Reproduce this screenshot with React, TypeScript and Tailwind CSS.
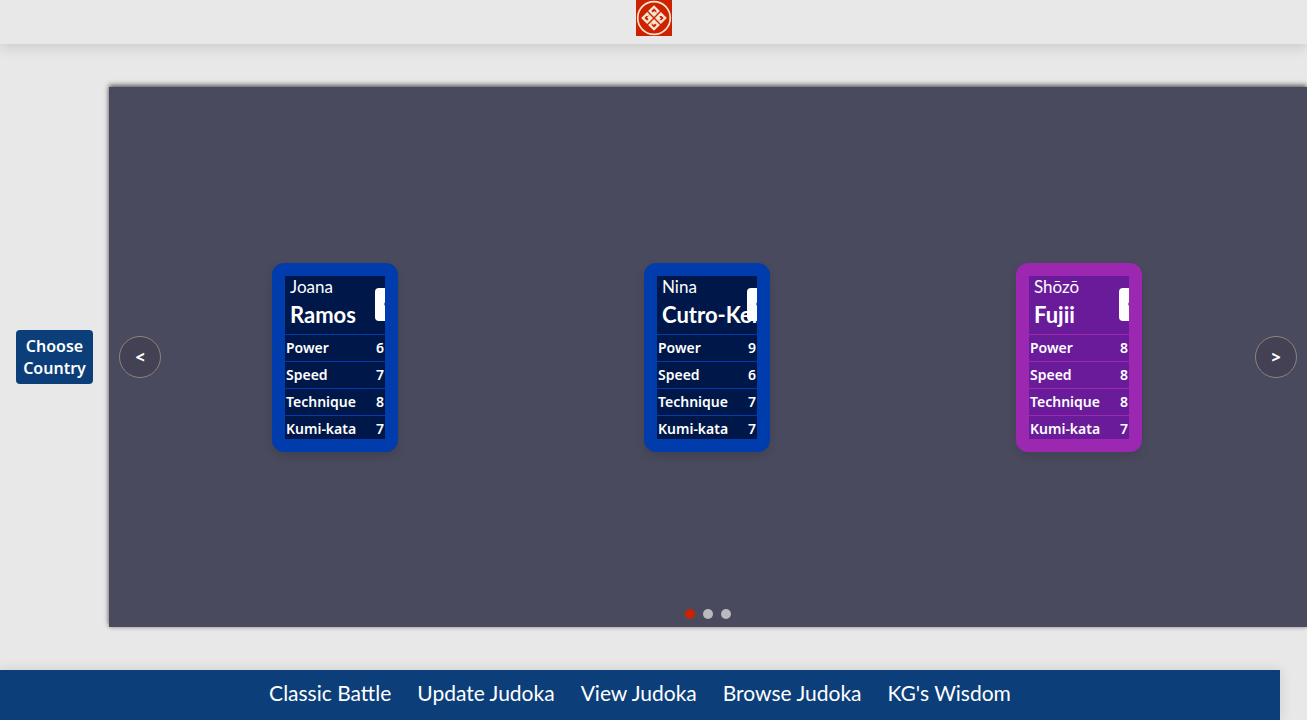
import React from "react";

type Stat = { label: string; value: number };
type Judoka = { first: string; last: string; rare?: boolean; stats: Stat[] };

const makeStats = (power: number, speed: number, technique: number, kumikata: number): Stat[] => [
  { label: "Power", value: power },
  { label: "Speed", value: speed },
  { label: "Technique", value: technique },
  { label: "Kumi-kata", value: kumikata },
];

const judoka: Judoka[] = [
  { first: "Joana", last: "Ramos", stats: makeStats(6, 7, 8, 7) },
  { first: "Nina", last: "Cutro-Kelly", stats: makeStats(9, 6, 7, 7) },
  { first: "Shōzō", last: "Fujii", rare: true, stats: makeStats(8, 8, 8, 7) },
];

const links = ["Classic Battle", "Update Judoka", "View Judoka", "Browse Judoka", "KG's Wisdom"];

function Logo() {
  return (
    <svg viewBox="0 0 36 36" className="block size-9" role="img" aria-label="JU-DO-KON! home">
      <rect width="36" height="36" fill="#cc2200" />
      <circle cx="18" cy="18" r="16.3" fill="none" stroke="#f7e6cf" strokeWidth="1.7" />
      <g fill="none" stroke="#f7e6cf" strokeWidth="2.3">
        <path d="M20.6 12.8 L22.3 11.1 L18 6.8 L13.7 11.1 L18 15.4 L19.6 13.8 L17.6 11.8" />
        <path d="M12.8 15.4 L11.1 13.7 L6.8 18 L11.1 22.3 L15.4 18 L13.8 16.4 L11.8 18.4" />
        <path d="M15.4 23.2 L13.7 24.9 L18 29.2 L22.3 24.9 L18 20.6 L16.4 22.2 L18.4 24.2" />
        <path d="M23.2 20.6 L24.9 22.3 L29.2 18 L24.9 13.7 L20.6 18 L22.2 19.6 L24.2 17.6" />
      </g>
    </svg>
  );
}

function JudokaCard({ card }: { card: Judoka }) {
  const frame = card.rare ? "border-[#9c27b0] bg-[#6a1b9a]" : "border-[#003cab] bg-[#001849]";
  const line = card.rare ? "border-[#9c27b0]" : "border-[#003cab]";
  return (
    <article className={`h-[189px] w-[126px] overflow-hidden rounded-xl border-[13px] text-white shadow-[0_4px_10px_rgba(0,0,0,0.12)] ${frame}`}>
      <div className="h-full overflow-hidden">
        <header className="relative h-[58px] px-[5px] font-['Lato',sans-serif]">
          <p className="pt-px text-[17px] leading-5">{card.first}</p>
          <h2 className="pt-1 text-[22px] leading-7 font-bold whitespace-nowrap">{card.last}</h2>
          <span className="absolute top-3 -right-[38px] flex h-[33px] w-12 items-center rounded bg-white pl-[9px]">
            <span className="h-1 w-[30px] rounded-full bg-[#77787c]" />
          </span>
        </header>
        <ul className="text-sm font-semibold">
          {card.stats.map((stat) => (
            <li key={stat.label} className={`flex h-[27px] items-center justify-between border-t px-px ${line}`}>
              <span>{stat.label}</span>
              <span>{stat.value}</span>
            </li>
          ))}
        </ul>
      </div>
    </article>
  );
}

function ArrowButton({ symbol, label }: { symbol: string; label: string }) {
  return (
    <button
      type="button"
      aria-label={label}
      className="flex size-[42px] shrink-0 items-center justify-center rounded-full border border-[#88857f] bg-[#444154] text-base font-extrabold text-white"
    >
      {symbol}
    </button>
  );
}

export default function App() {
  return (
    <div className="flex min-h-screen flex-col overflow-x-hidden bg-[#e8e8e8] font-['Noto_Sans','Open_Sans',sans-serif]">
      <header className="flex h-11 justify-center shadow-[0_4px_12px_rgba(0,0,0,0.12)]">
        <a href="#home" className="block size-9">
          <Logo />
        </a>
      </header>

      <main className="flex flex-1 items-stretch gap-4 py-[43px] pl-4">
        <button
          type="button"
          className="w-[77px] self-center rounded bg-[#0c3e7a] px-1 py-[5px] text-base leading-[22px] font-semibold text-white"
        >
          Choose Country
        </button>

        <section
          aria-label="Judoka cards"
          className="flex min-w-0 flex-1 flex-col bg-[#4a4a5e] shadow-[0_-2px_5px_rgba(0,0,0,0.6),0_1px_4px_rgba(0,0,0,0.15)]"
        >
          <div className="flex flex-1 items-center px-[10px] pt-[26px]">
            <ArrowButton symbol="<" label="Previous" />
            <div className="-mr-[10px] -ml-3 grid flex-1 grid-cols-3 justify-items-center">
              {judoka.map((card) => (
                <JudokaCard key={card.last} card={card} />
              ))}
            </div>
            <ArrowButton symbol=">" label="Next" />
          </div>
          <div className="flex h-[26px] items-center justify-center gap-2">
            <button type="button" aria-label="Page 1" className="size-[10px] rounded-full bg-[#cc2200]" />
            <button type="button" aria-label="Page 2" className="size-[10px] rounded-full bg-[#bab9c0]" />
            <button type="button" aria-label="Page 3" className="size-[10px] rounded-full bg-[#bab9c0]" />
          </div>
        </section>
      </main>

      <footer className="mr-[27px] bg-[#0c3e7a] shadow-[0_0_12px_rgba(0,0,0,0.12)]">
        <nav>
          <ul className="flex h-[50px] items-center justify-center gap-[26px] pb-1 font-['Lato',sans-serif] text-[21px] leading-7 text-white">
            {links.map((text) => (
              <li key={text}>
                <a href="#menu">{text}</a>
              </li>
            ))}
          </ul>
        </nav>
      </footer>
    </div>
  );
}
